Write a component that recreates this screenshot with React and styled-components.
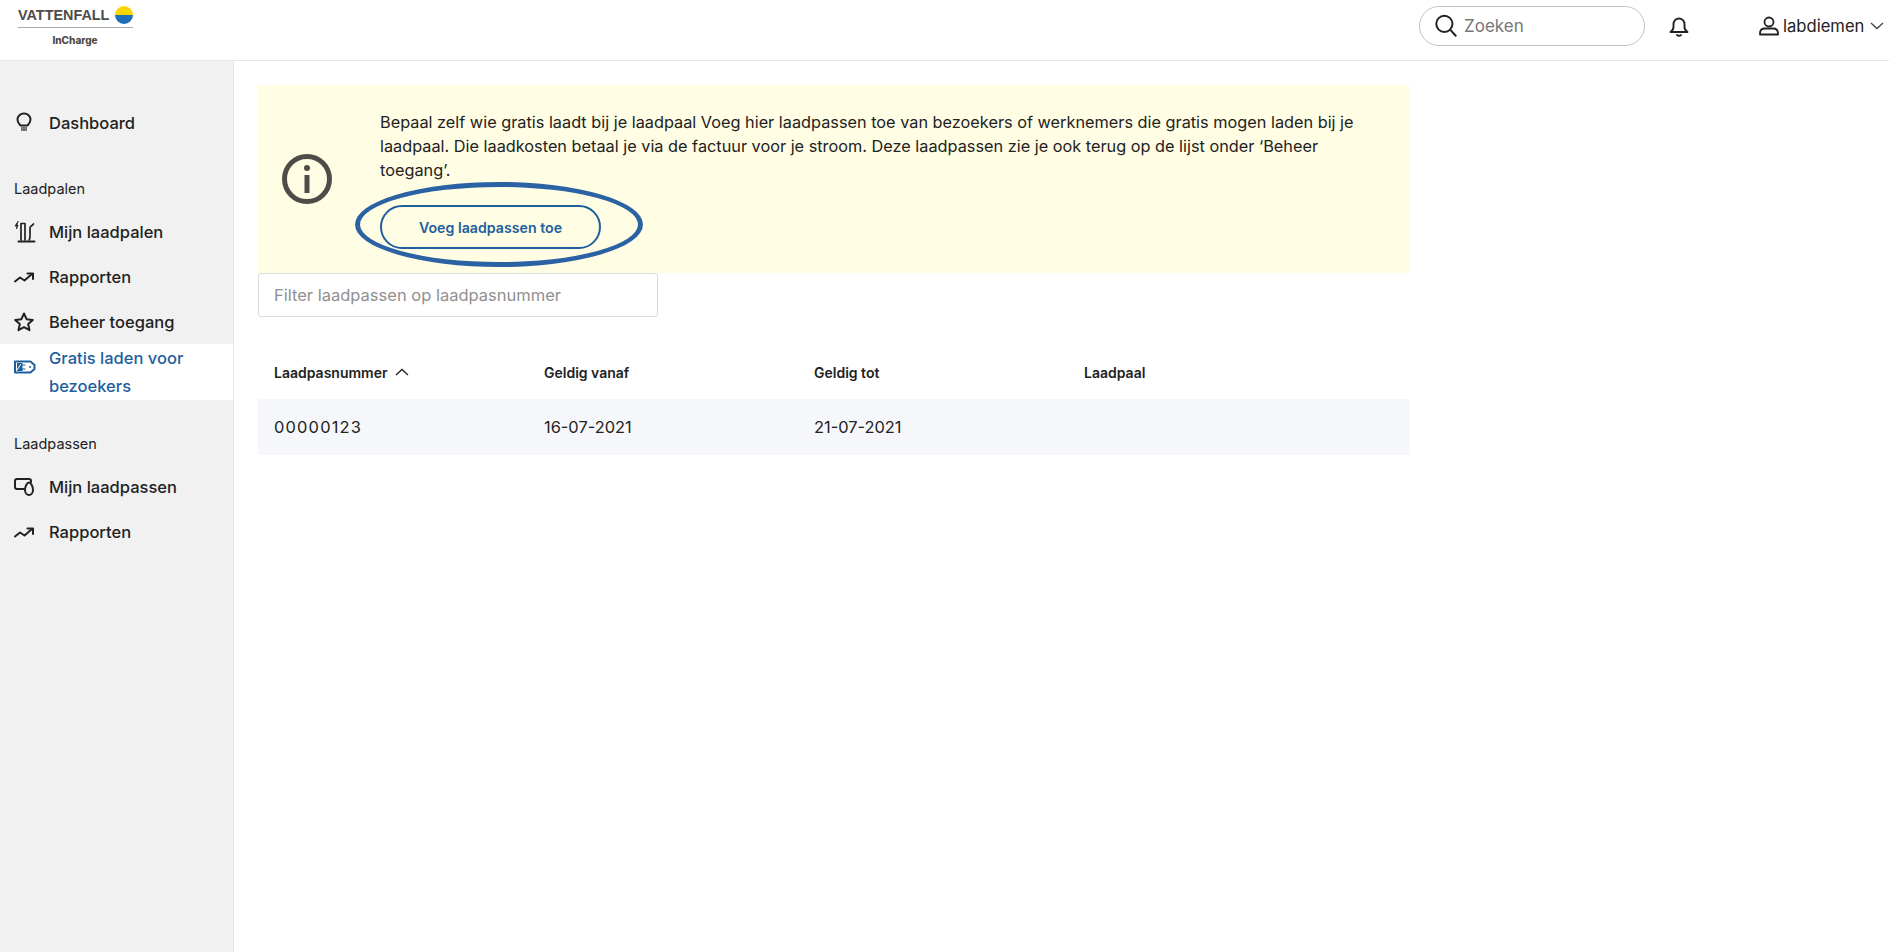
import React from 'react'
import styled, { createGlobalStyle } from 'styled-components'

const Global = createGlobalStyle`
html,body{margin:0;padding:0;height:100%;background:#fff;}
body{font-family:Inter,"Liberation Sans",sans-serif;color:#1e1e1e;}
*{box-sizing:border-box;}
`

const Icon = ({ children, size = 24, color = 'currentColor', sw = 1.8 }) => (
  <svg width={size} height={size} viewBox="0 0 24 24" fill="none" stroke={color} strokeWidth={sw} strokeLinecap="round" strokeLinejoin="round">
    {children}
  </svg>
)

const Trend = () => (
  <Icon sw={2}>
    <path d="M3 16.5l5-4 4.5 3L20 9" />
    <path d="M15.5 8.5H21V14" />
  </Icon>
)

const App = () => {
  return (
    <Page>
      <Global />
      <Header>
        <Logo>
          <LogoTop>
            <LogoWord>VATTENFALL</LogoWord>
            <svg width="18" height="18" viewBox="0 0 18 18">
              <path d="M0 9a9 9 0 0 1 18 0z" fill="#ffd500" />
              <path d="M0 9a9 9 0 0 0 18 0z" fill="#1e6fb8" />
            </svg>
          </LogoTop>
          <LogoSub>InCharge</LogoSub>
        </Logo>
        <HeaderRight>
          <Search>
            <Icon size={26} color="#222" sw={1.8}>
              <circle cx="10.5" cy="10" r="7.5" />
              <path d="M16 15.5l5 5.5" />
            </Icon>
            <span>Zoeken</span>
          </Search>
          <Bell>
            <Icon size={24} sw={1.9}>
              <path d="M3.500 18c1.500-1 3-2 3-5V10a5.500 5.500 0 0 1 11 0v3c0 3 1.500 4 3 5z" />
              <path d="M10 21c1 .8 3 .8 4 0" />
            </Icon>
          </Bell>
          <User>
            <Icon size={24} sw={1.8}>
              <circle cx="12" cy="8" r="4.5" />
              <path d="M3 20.500v-1c0-3 2-5 5-5h8c3 0 5 2 5 5v1z" />
            </Icon>
            <span>labdiemen</span>
            <svg width="14" height="8" viewBox="0 0 14 8" fill="none" stroke="#444" strokeWidth="1.3">
              <path d="M1 1l6 5.500L13 1" />
            </svg>
          </User>
        </HeaderRight>
      </Header>
      <Body>
        <Sidebar>
          <NavItem>
            <Icon sw={2}>
              <path d="M8.500 14.500C7 12.500 5.500 11.500 5.500 8.500a6.500 6 0 0 1 13 0c0 3-1.500 4-3 6z" />
              <path d="M9 18h6" stroke="#777" strokeWidth="4" strokeLinecap="butt" />
            </Icon>
            <span>Dashboard</span>
          </NavItem>
          <NavLabel>Laadpalen</NavLabel>
          <NavItem>
            <Icon sw={1.7}>
              <path d="M6 1.500L3 6h2l-.5 3L6 5H5z" fill="currentColor" strokeWidth="0.8" />
              <path d="M9 20V3.500h4V20" />
              <path d="M17 20c1-1 1-2 1-4V8c0-2 2-2 3.500-4" />
              <path d="M6.500 21.500h16" strokeWidth="2" />
            </Icon>
            <span>Mijn laadpalen</span>
          </NavItem>
          <NavItem>
            <Trend />
            <span>Rapporten</span>
          </NavItem>
          <NavItem>
            <Icon sw={2}>
              <path d="M12 3.500l2.600 5.700 6.200.7-4.600 4.200 1.300 6.100L12 17.200l-5.500 3 1.300-6.100-4.600-4.200 6.200-.7z" />
            </Icon>
            <span>Beheer toegang</span>
          </NavItem>
          <ActiveItem>
            <Icon color="#1e5f9e" sw={2}>
              <path d="M3 6.500h15.500l4 3.500v4l-4 3.500H3z" />
              <path d="M5 8h5.500v8H5z" fill="#1e5f9e" stroke="none" />
              <path d="M8.500 9.500l-3 5" stroke="#fff" strokeWidth="1" />
              <path d="M10 10h3M10 14h3" strokeWidth="1.200" />
              <path d="M18 12v.1" strokeWidth="2" />
            </Icon>
            <span>Gratis laden voor bezoekers</span>
          </ActiveItem>
          <NavLabel>Laadpassen</NavLabel>
          <NavItem>
            <Icon sw={2}>
              <path d="M12 14H5a2 2 0 0 1-2-2V6a2 2 0 0 1 2-2h12a2 2 0 0 1 2 2v1" />
              <path d="M17 7.500c-2 0-4 4-4 7.500 0 3 2 5 4 5s4-2 4-5c0-3.500-2-7.500-4-7.500z" />
            </Icon>
            <span>Mijn laadpassen</span>
          </NavItem>
          <NavItem>
            <Trend />
            <span>Rapporten</span>
          </NavItem>
        </Sidebar>
        <Main>
          <Banner>
            <InfoBadge>
              <svg width="50" height="50" viewBox="0 0 50 50" fill="none">
                <circle cx="25" cy="25" r="22.500" stroke="#4e4b48" strokeWidth="5" />
                <circle cx="25" cy="14" r="3" fill="#4e4b48" />
                <rect x="22.500" y="21" width="5" height="18" fill="#4e4b48" />
              </svg>
            </InfoBadge>
            <BannerBody>
              <BannerText>
                Bepaal zelf wie gratis laadt bij je laadpaal Voeg hier laadpassen toe van bezoekers of werknemers die gratis mogen laden bij je laadpaal. Die laadkosten betaal je via de factuur voor je stroom. Deze laadpassen zie je ook terug op de lijst onder ‘Beheer toegang’.
              </BannerText>
              <AddButton>Voeg laadpassen toe</AddButton>
            </BannerBody>
            <Circled />
          </Banner>
          <Filter placeholder="Filter laadpassen op laadpasnummer" />
          <HeadRow>
            <HeadCell>
              Laadpasnummer
              <svg width="14" height="8" viewBox="0 0 14 8" fill="none" stroke="#222" strokeWidth="1.3">
                <path d="M1 7l6-5.500L13 7" />
              </svg>
            </HeadCell>
            <HeadCell>Geldig vanaf</HeadCell>
            <HeadCell>Geldig tot</HeadCell>
            <HeadCell>Laadpaal</HeadCell>
          </HeadRow>
          <DataRow>
            <NumberCell>00000123</NumberCell>
            <Cell>16-07-2021</Cell>
            <Cell>21-07-2021</Cell>
            <Cell />
          </DataRow>
        </Main>
      </Body>
    </Page>
  )
}

const Page = styled.div`
display:flex;
flex-direction:column;
height:952px;
overflow:hidden;
`

const Header = styled.header`
height:61px;
flex:none;
display:flex;
justify-content:space-between;
border-bottom:1px solid #e6e6e6;
`

const Logo = styled.div`
width:115px;
margin:6px 0 0 18px;
`

const LogoTop = styled.div`
display:flex;
align-items:flex-start;
justify-content:space-between;
height:22px;
border-bottom:1px solid #aaa;
`

const LogoWord = styled.span`
font:700 14.4px/18px "Liberation Sans",sans-serif;
color:#4e4b48;
`

const LogoSub = styled.div`
font:800 10px Inter,sans-serif;
color:#4e4b48;
margin-top:6px;
text-align:center;
padding-right:1px;
`

const HeaderRight = styled.div`
display:flex;
align-items:center;
padding-bottom:8px;
`

const Search = styled.div`
width:226px;
height:40px;
border:1px solid #c4c4c4;
border-radius:20px;
display:flex;
align-items:center;
gap:5px;
padding-left:13px;
font-size:17px;
color:#777;
`

const Bell = styled.div`
display:flex;
margin-left:22px;
color:#222;
`

const User = styled.div`
display:flex;
align-items:center;
margin-left:66px;
gap:2px;
font-size:16.6px;
color:#222;
width:132px;
svg:last-child{margin-left:4px;}
`

const Body = styled.div`
flex:1;
display:flex;
min-height:0;
`

const Sidebar = styled.nav`
width:234px;
flex:none;
background:#f1f1f1;
border-right:1px solid #e6e6e6;
padding-top:39px;
`

const NavItem = styled.div`
display:flex;
align-items:center;
gap:13px;
height:45px;
padding-left:12px;
font-size:16.5px;
font-weight:500;
color:#222;
svg{flex:none;}
`

const ActiveItem = styled(NavItem)`
height:56px;
background:#fff;
color:#1e5f9e;
line-height:28px;
width:233px;
padding-right:30px;
svg{margin-bottom:10px;}
`

const NavLabel = styled.div`
font-size:14.5px;
color:#222;
height:17px;
line-height:17px;
margin:35px 0 12px;
padding-left:14px;
`

const Main = styled.main`
flex:1;
padding:24px 0 0 24px;
`

const Banner = styled.section`
position:relative;
width:1152px;
height:188px;
background:#fffde3;
display:flex;
`

const InfoBadge = styled.div`
width:122px;
flex:none;
display:flex;
align-items:center;
padding-left:24px;
`

const BannerBody = styled.div`
padding-top:25px;
flex:1;
`

const BannerText = styled.p`
margin:0;
width:990px;
font-size:16.3px;
line-height:24px;
color:#222;
`

const AddButton = styled.button`
display:block;
margin-top:23px;
width:221px;
height:44px;
background:transparent;
border:2px solid #1e5f9e;
border-radius:22px;
color:#1e5f9e;
font:600 14.2px Inter,sans-serif;
`

const Circled = styled.div`
position:absolute;
left:97px;
top:97px;
width:288px;
height:85px;
border:5px solid #2b62a3;
border-radius:50%;
pointer-events:none;
`

const Filter = styled.input`
display:block;
width:400px;
height:44px;
border:1px solid #d9d9d9;
border-radius:3px;
padding:0 15px;
font:16.5px Inter,sans-serif;
outline:none;
&::placeholder{color:#909090;opacity:1;}
`

const Row = styled.div`
width:1152px;
display:grid;
grid-template-columns:repeat(4,270px);
padding-left:16px;
align-items:center;
`

const HeadRow = styled(Row)`
margin-top:28px;
height:54px;
`

const DataRow = styled(Row)`
height:56px;
background:#f5f7fa;
`

const HeadCell = styled.div`
display:flex;
align-items:center;
gap:7px;
font-size:14px;
font-weight:600;
color:#222;
`

const Cell = styled.div`
font-size:16.4px;
color:#222;
`

const NumberCell = styled(Cell)`
letter-spacing:1.2px;
`

export default App
